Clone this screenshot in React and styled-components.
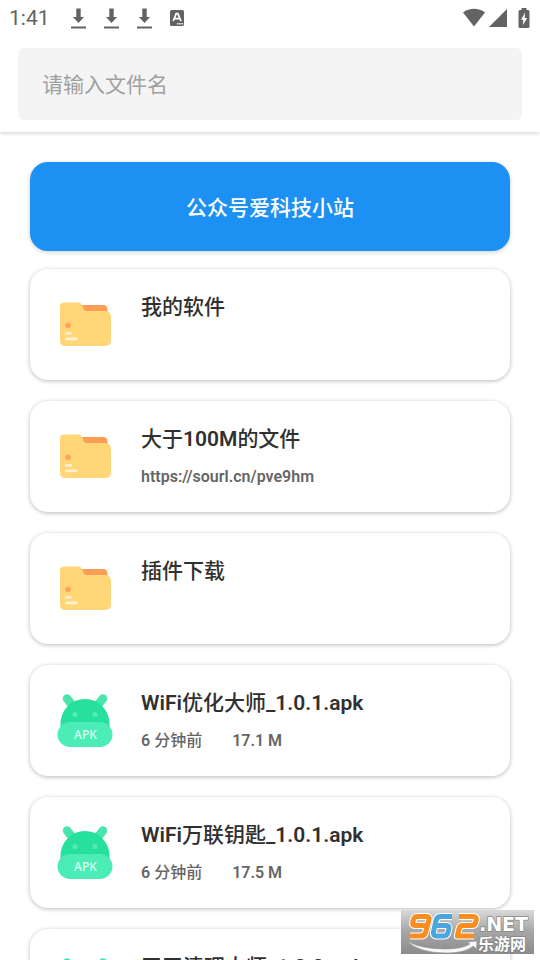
import React from "react";
import styled, { createGlobalStyle } from "styled-components";

const GlobalStyle = createGlobalStyle`
  * { box-sizing: border-box; }
  body {
    margin: 0;
    background: #ffffff;
    font-family: Roboto, "Noto Sans CJK SC", sans-serif;
    color: #303030;
  }
`;

const Screen = styled.div`
  display: flex;
  flex-direction: column;
  height: 100vh;
  overflow: hidden;
`;

const Header = styled.header`
  flex: none;
  background: #ffffff;
  box-shadow: 0 1px 4px rgba(0, 0, 0, 0.2);
  z-index: 1;
`;

const StatusBar = styled.div`
  display: flex;
  align-items: center;
  justify-content: space-between;
  height: 36px;
  padding: 0 10px 0 9px;
  color: #636363;
`;

const StatusGroup = styled.div`
  display: flex;
  align-items: center;
  gap: ${(p) => p.$gap}px;
`;

const Clock = styled.time`
  font-size: 21px;
  line-height: 38px;
  margin-right: 4px;
`;

const SearchArea = styled.form`
  display: flex;
  padding: 12px 18px;
`;

const SearchInput = styled.input`
  flex: 1;
  min-width: 0;
  height: 72px;
  padding: 2px 24px 0;
  border: 0;
  border-radius: 6px;
  outline: none;
  background: #f4f4f4;
  color: #303030;
  font-family: inherit;
  font-size: 21px;
  &::placeholder {
    color: #a0a0a0;
    opacity: 1;
  }
`;

const Content = styled.main`
  flex: 1;
  min-height: 0;
  overflow-y: auto;
  scrollbar-width: none;
  padding: 30px;
`;

const Banner = styled.button`
  display: block;
  width: 100%;
  height: 89px;
  padding: 2px 0 0;
  border: 0;
  border-radius: 18px;
  background: #1c90f3;
  box-shadow: 0 1px 4px rgba(0, 0, 0, 0.2);
  color: #ffffff;
  font-family: inherit;
  font-size: 21px;
  font-weight: 500;
  line-height: 30px;
`;

const FileList = styled.ul`
  display: flex;
  flex-direction: column;
  gap: 21px;
  margin: 18px 0 0;
  padding: 0;
  list-style: none;
`;

const FileCard = styled.li`
  display: flex;
  align-items: center;
  gap: 27px;
  min-height: 111px;
  padding: 0 24px;
  border-radius: 18px;
  background: #ffffff;
  box-shadow: 0 1px 4px rgba(0, 0, 0, 0.28);
`;

const FileIcon = styled.svg`
  flex: none;
  display: block;
  width: 60px;
  height: 60px;
`;

const FileText = styled.div`
  display: flex;
  flex-direction: column;
  gap: 11px;
  min-width: 0;
  min-height: 65px;
`;

const FileName = styled.h2`
  margin: 0;
  font-size: 21px;
  font-weight: 500;
  line-height: 30px;
`;

const FileMeta = styled.div`
  display: flex;
  gap: 30px;
  color: #666666;
  font-size: 16px;
  font-weight: 500;
  line-height: 24px;
`;

const Latin = styled.span`
  font-weight: 600;
`;

const Watermark = styled.svg`
  position: fixed;
  right: 6px;
  bottom: 6px;
  width: 133px;
  height: 44px;
  z-index: 2;
`;

/* Latin runs are set semibold, Chinese runs keep the medium weight. */
function MixedText({ text }) {
  return text
    .split(/([\x20-\x7e]+)/)
    .filter(Boolean)
    .map((run, i) => (/^[\x20-\x7e]/.test(run) ? <Latin key={i}>{run}</Latin> : run));
}

function DownloadIcon() {
  return (
    <svg width="17" height="22" viewBox="0 0 17 22" fill="currentColor" aria-hidden="true">
      <path d="M6.3 1.500h4.400v8.600H14L8.500 16 3 10.100h3.300z" />
      <path d="M1 19.500h15v2H1z" />
    </svg>
  );
}

function KeyboardIcon() {
  return (
    <svg width="16" height="18" viewBox="0 0 16 18" aria-hidden="true">
      <rect x="1" y="1" width="14" height="16" rx="1.600" fill="currentColor" />
      <path d="M4.200 12 7.200 4.600h1.700l3 7.400M5.300 9.600h5.400" fill="none" stroke="#fff" strokeWidth="1.700" />
      <path d="M8 14h1.500v1.400H8zm2.300 0h1.500v1.400h-1.500zm2.300 0h1.400v1.400h-1.400z" fill="#fff" />
    </svg>
  );
}

function WifiIcon() {
  return (
    <svg width="22" height="20" viewBox="0 0 22 20" fill="currentColor" aria-hidden="true">
      <path d="M0 4.400C6.200-.4 15.800-.4 22 4.400L11 18.600z" />
    </svg>
  );
}

function SignalIcon() {
  return (
    <svg width="18" height="20" viewBox="0 0 18 20" fill="currentColor" aria-hidden="true">
      <path d="M18 1v18H0z" />
    </svg>
  );
}

function BatteryIcon() {
  return (
    <svg width="12" height="20" viewBox="0 0 12 20" aria-hidden="true">
      <path d="M3.500 0h5v2H10q1.500 0 1.500 1.500v15Q11.500 20 10 20H2Q.5 20 .5 18.500v-15Q.5 2 2 2h1.500z" fill="currentColor" />
      <path d="M7.200 4.500 3 11.800h2.400L4.800 17.200l4.400-7.200H6.600z" fill="#fff" />
    </svg>
  );
}

function FolderIcon() {
  return (
    <FileIcon viewBox="0 0 60 60" aria-hidden="true">
      <path d="M25 10h24q4.500 0 4.500 4.500V23H25z" fill="#ff9c56" />
      <path d="M10 7.500h14q4 0 5 4.500.5 4 3.500 4h18q6.500 0 6.500 6V45q0 6-6 6H11q-5 0-5-5V11.500q0-4 4-4z" fill="#ffd777" />
      <circle cx="14" cy="30.200" r="2.800" fill="#ffa264" />
      <rect x="11" y="37" width="7" height="2.800" rx="1.400" fill="#fff0cf" />
      <rect x="11" y="42.500" width="12.500" height="2.800" rx="1.400" fill="#fff0cf" />
    </FileIcon>
  );
}

function ApkIcon() {
  return (
    <FileIcon viewBox="0 0 60 60" aria-hidden="true">
      <path d="m13 7.500 7.500 9.500m28.500-9.500-7.500 9.500" stroke="#4ae5ad" strokeWidth="8.500" strokeLinecap="round" />
      <path d="M6.500 44V32.500a24.500 24.500 0 0 1 49 0V44z" fill="#26e09e" />
      <circle cx="21" cy="23.500" r="2.600" fill="#56e9b4" />
      <circle cx="41" cy="23.500" r="2.600" fill="#56e9b4" />
      <rect x="3.500" y="31" width="55" height="25" rx="12.500" fill="#4cecb7" />
      <text x="31.500" y="48" textAnchor="middle" fontFamily="'Noto Sans', sans-serif" fontSize="12" fontWeight="500" fill="#ddfff2">
        APK
      </text>
    </FileIcon>
  );
}

function SiteMark() {
  return (
    <Watermark viewBox="0 0 133 44" role="img" aria-label="962.NET 乐游网">
      <defs>
        <linearGradient id="plate" x1="0" y1="0" x2="0" y2="1">
          <stop offset="0" stopColor="#d9d9d9" />
          <stop offset="0.45" stopColor="#a9a9a9" />
          <stop offset="1" stopColor="#8b8b8b" />
        </linearGradient>
      </defs>
      <rect width="133" height="44" fill="url(#plate)" />
      <g fill="none" strokeLinejoin="round">
        {["#ffffff", null].map((outline) => (
          <g key={outline || "digits"} strokeWidth={outline ? 7 : 5}>
            <path d="M26 15.500H14q-3 0-2.300-3l.8-3q.8-3 3.800-3h9q3.500 0 2.700 3.200L24.700 22q-1 4-5 4H9" stroke={outline || "#f98d1f"} />
            <path d="M51 6.500H40q-4 0-5 4L32.500 22q-.8 4 3.200 4h7q3.500 0 4.300-3.500l.8-3.500q.8-3.500-2.700-3.500H35" stroke={outline || "#4ba6dd"} />
            <path d="M58 6.500h14q4 0 3.200 3.500l-.5 2q-.7 3.500-4 3.500H62q-3.200 0-4 3.500L56.300 26H73" stroke={outline || "#f98d1f"} />
          </g>
        ))}
      </g>
      <path d="M6 31q12 12 39 12 20 0 27-7l3.500 3L76 31l-10 1 3 2q-8 5-25 5Q20 39 6 31z" fill="#f8f8f8" stroke="#8f8f8f" strokeWidth=".6" />
      <text x="78" y="21" fontFamily="'DejaVu Sans', sans-serif" fontSize="19" fontWeight="700" fill="#fff" stroke="#888" strokeWidth="1.500" paintOrder="stroke">
        .NET
      </text>
      <text x="77" y="40" fontFamily="'Noto Sans CJK SC', sans-serif" fontSize="16" fontWeight="700" fill="#fff" stroke="#777" strokeWidth="1" paintOrder="stroke">
        乐游网
      </text>
    </Watermark>
  );
}

const files = [
  { kind: "folder", name: "我的软件", meta: [] },
  { kind: "folder", name: "大于100M的文件", meta: ["https://sourl.cn/pve9hm"] },
  { kind: "folder", name: "插件下载", meta: [] },
  { kind: "apk", name: "WiFi优化大师_1.0.1.apk", meta: ["6 分钟前", "17.1 M"] },
  { kind: "apk", name: "WiFi万联钥匙_1.0.1.apk", meta: ["6 分钟前", "17.5 M"] },
  { kind: "apk", name: "天天清理大师_1.0.0.apk", meta: [] },
];

export default function App() {
  return (
    <Screen>
      <GlobalStyle />
      <Header>
        <StatusBar>
          <StatusGroup $gap={16}>
            <Clock>1:41</Clock>
            <DownloadIcon />
            <DownloadIcon />
            <DownloadIcon />
            <KeyboardIcon />
          </StatusGroup>
          <StatusGroup $gap={4}>
            <WifiIcon />
            <StatusGroup $gap={11}>
              <SignalIcon />
              <BatteryIcon />
            </StatusGroup>
          </StatusGroup>
        </StatusBar>
        <SearchArea role="search">
          <SearchInput type="text" placeholder="请输入文件名" aria-label="请输入文件名" />
        </SearchArea>
      </Header>
      <Content>
        <Banner type="button">公众号爱科技小站</Banner>
        <FileList>
          {files.map((file) => (
            <FileCard key={file.name}>
              {file.kind === "folder" ? <FolderIcon /> : <ApkIcon />}
              <FileText>
                <FileName>
                  <MixedText text={file.name} />
                </FileName>
                <FileMeta>
                  {file.meta.map((item) => (
                    <span key={item}>
                      <MixedText text={item} />
                    </span>
                  ))}
                </FileMeta>
              </FileText>
            </FileCard>
          ))}
        </FileList>
      </Content>
      <SiteMark />
    </Screen>
  );
}
